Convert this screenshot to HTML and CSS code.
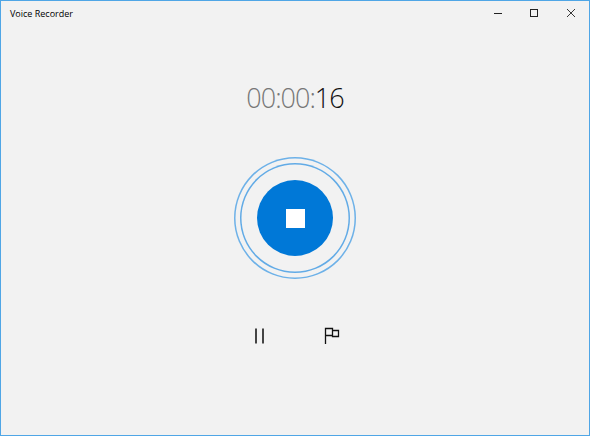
FILE: index.html
```html
<!DOCTYPE html>
<html lang="en">

<head>
    <meta charset="UTF-8">
    <meta name="viewport" content="width=device-width, initial-scale=1.0">
    <title>Voice Recorder</title>
    <link rel="stylesheet" href="styles.css">
</head>

<body>
    <div class="window">
        <div class="titlebar">
            <span class="app-title">Voice Recorder</span>
            <div class="caption-buttons">
                <button class="caption-btn" aria-label="Minimize">
                    <svg width="10" height="10" viewBox="0 0 10 10"><path d="M1 5.5H9" stroke="#222" fill="none"/></svg>
                </button>
                <button class="caption-btn" aria-label="Maximize">
                    <svg width="10" height="10" viewBox="0 0 10 10"><rect x="1.5" y="1.5" width="7" height="7" stroke="#222" fill="none"/></svg>
                </button>
                <button class="caption-btn" aria-label="Close">
                    <svg width="10" height="10" viewBox="0 0 10 10"><path d="M1 1L9 9M9 1L1 9" stroke="#222" stroke-width="0.9" fill="none"/></svg>
                </button>
            </div>
        </div>

        <div class="recorder">
            <div class="timer"><span class="timer-dim">00:00:</span>16</div>

            <div class="record-area">
                <div class="ring-outer">
                    <div class="ring-inner">
                        <button class="stop-btn" aria-label="Stop recording"><span class="stop-square"></span></button>
                    </div>
                </div>
            </div>

            <div class="controls">
                <button class="control-btn" aria-label="Pause">
                    <svg width="20" height="20" viewBox="0 0 20 20"><path d="M7 2.5V17.5M14 2.5V17.5" stroke="#444" stroke-width="2" fill="none"/></svg>
                </button>
                <button class="control-btn" aria-label="Add marker">
                    <svg width="20" height="20" viewBox="0 0 20 20"><path d="M4.5 18V2.5H11.5V9.5H4.5M11.5 4.5H17.5V10.5H11.5V9.5" stroke="#111" stroke-width="1.3" fill="none"/></svg>
                </button>
            </div>
        </div>
    </div>
</body>

</html>
```

FILE: styles.css
```css
html,
body {
    margin: 0;
    padding: 0;
    height: 100%;
}

body {
    font-family: "Open Sans", "Liberation Sans", sans-serif;
    background-color: #f2f2f2;
}

button {
    border: none;
    background: none;
    padding: 0;
    margin: 0;
    cursor: pointer;
}

.window {
    box-sizing: border-box;
    width: 590px;
    height: 436px;
    border: 1px solid #4fa6e6;
    display: flex;
    flex-direction: column;
}

.titlebar {
    display: flex;
    justify-content: space-between;
    height: 29px;
    flex-shrink: 0;
}

.app-title {
    margin-left: 9px;
    font-size: 9px;
    line-height: 25px;
    color: #000;
}

.caption-buttons {
    display: flex;
}

.caption-btn {
    width: 36.5px;
    height: 23px;
    display: flex;
    align-items: center;
    justify-content: center;
}

.recorder {
    display: flex;
    flex-direction: column;
    align-items: center;
}

.timer {
    margin-top: 48px;
    font-size: 27px;
    font-weight: 300;
    letter-spacing: -1px;
    line-height: 40px;
    color: #111;
}

.timer-dim {
    color: #777;
}

.record-area {
    margin-top: 39px;
}

.ring-outer {
    width: 122px;
    height: 122px;
    border-radius: 50%;
    box-shadow: inset 0 0 0 1.5px #6db1e8;
    display: flex;
    align-items: center;
    justify-content: center;
}

.ring-inner {
    width: 110px;
    height: 110px;
    border-radius: 50%;
    box-shadow: inset 0 0 0 1.5px #62abe6;
    display: flex;
    align-items: center;
    justify-content: center;
}

.stop-btn {
    width: 76px;
    height: 76px;
    border-radius: 50%;
    background-color: #0078d7;
    display: flex;
    align-items: center;
    justify-content: center;
}

.stop-square {
    width: 19px;
    height: 19px;
    background-color: #fff;
}

.controls {
    display: flex;
    gap: 52px;
    margin-top: 47px;
}

.control-btn {
    width: 20px;
    height: 20px;
    display: block;
}
```
